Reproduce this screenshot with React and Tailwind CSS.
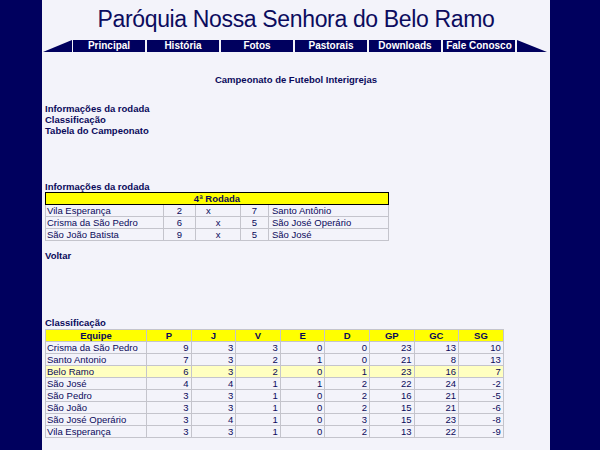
import React from 'react'

const NAV_ITEMS = ['Principal', 'História', 'Fotos', 'Pastorais', 'Downloads', 'Fale Conosco']

const ROUND_GAMES = [
  { home: 'Vila Esperança', hs: 2, as: 7, away: 'Santo Antônio', xLeft: true },
  { home: 'Crisma da São Pedro', hs: 6, as: 5, away: 'São José Operário' },
  { home: 'São João Batista', hs: 9, as: 5, away: 'São José' },
]

const COLUMNS = ['P', 'J', 'V', 'E', 'D', 'GP', 'GC', 'SG']

const STANDINGS = [
  ['Crisma da São Pedro', 9, 3, 3, 0, 0, 23, 13, 10],
  ['Santo Antonio', 7, 3, 2, 1, 0, 21, 8, 13],
  ['Belo Ramo', 6, 3, 2, 0, 1, 23, 16, 7],
  ['São José', 4, 4, 1, 1, 2, 22, 24, -2],
  ['São Pedro', 3, 3, 1, 0, 2, 16, 21, -5],
  ['São João', 3, 3, 1, 0, 2, 15, 21, -6],
  ['São José Operário', 3, 4, 1, 0, 3, 15, 23, -8],
  ['Vila Esperança', 3, 3, 1, 0, 2, 13, 22, -9],
]

const cell = 'border border-[#c4c4cc] h-[12px] p-0 leading-[11px]'

export default function App() {
  return (
    <div
      className="flex w-[600px] h-[450px] overflow-hidden text-[#0a0a5a]"
      style={{ fontFamily: "'Liberation Sans', Arial, sans-serif" }}
    >
      <div className="w-[42px] shrink-0 bg-[#00005e]" />

      <main className="w-[508px] shrink-0 bg-[#f3f3fa] flex flex-col">
        {/* Title */}
        <div className="h-[40px] pt-[6px] text-center">
          <h1 className="text-[23px] leading-[26px] tracking-[-0.35px] text-[#0c0c5e]">
            Paróquia Nossa Senhora do Belo Ramo
          </h1>
        </div>

        {/* Menu */}
        <nav className="flex h-[12px] pl-[1px]">
          <svg width="29" height="12" viewBox="0 0 29 12" className="shrink-0">
            <polygon points="0,12 29,0 29,12" fill="#00005e" />
          </svg>
          <div className="flex gap-[2px] ml-[1px]">
            {NAV_ITEMS.map((item) => (
              <span
                key={item}
                className="w-[72px] h-[12px] bg-[#00005e] text-white text-[10px] font-bold leading-[12px] text-center"
              >
                {item}
              </span>
            ))}
          </div>
          <svg width="30" height="12" viewBox="0 0 30 12" className="shrink-0 ml-[2px]">
            <polygon points="0,0 0,12 30,12" fill="#00005e" />
          </svg>
        </nav>

        <div className="text-[9.5px] px-[3px]">
          <p className="mt-[22px] font-bold text-center leading-[12px]">
            Campeonato de Futebol Interigrejas
          </p>

          {/* Links */}
          <div className="mt-[17px] font-bold leading-[11px] flex flex-col">
            <span>Informações da rodada</span>
            <span>Classificação</span>
            <span>Tabela do Campeonato</span>
          </div>

          {/* Round */}
          <p className="mt-[45px] font-bold leading-[11px]">Informações da rodada</p>
          <table className="w-[343px] border-collapse table-fixed">
            <colgroup>
              <col className="w-[118px]" />
              <col className="w-[32px]" />
              <col className="w-[45px]" />
              <col className="w-[28px]" />
              <col className="w-[120px]" />
            </colgroup>
            <tbody>
              <tr>
                <td colSpan={5} className="border border-black bg-[#ffff00] h-[12px] p-0 leading-[11px] text-center font-bold">
                  4ª Rodada
                </td>
              </tr>
              {ROUND_GAMES.map((g) => (
                <tr key={g.home}>
                  <td className={`${cell} pl-[1px]`}>{g.home}</td>
                  <td className={`${cell} text-center`}>{g.hs}</td>
                  <td className={`${cell} ${g.xLeft ? 'text-left pl-[10px]' : 'text-center'}`}>x</td>
                  <td className={`${cell} text-center`}>{g.as}</td>
                  <td className={`${cell} pl-[3px]`}>{g.away}</td>
                </tr>
              ))}
            </tbody>
          </table>

          <p className="mt-[9px] font-bold leading-[12px]">Voltar</p>

          {/* Standings */}
          <p className="mt-[55px] font-bold leading-[12px]">Classificação</p>
          <table className="w-[458px] border-collapse table-fixed">
            <colgroup>
              <col className="w-[101px]" />
              {COLUMNS.map((c) => (
                <col key={c} className="w-[44.6px]" />
              ))}
            </colgroup>
            <thead>
              <tr className="bg-[#ffff00]">
                <th className={`${cell} font-bold text-center`}>Equipe</th>
                {COLUMNS.map((c) => (
                  <th key={c} className={`${cell} font-bold text-center`}>{c}</th>
                ))}
              </tr>
            </thead>
            <tbody>
              {STANDINGS.map(([team, ...nums]) => (
                <tr key={team} className={team === 'Belo Ramo' ? 'bg-[#ffffc0]' : ''}>
                  <td className={`${cell} pl-[1px]`}>{team}</td>
                  {nums.map((n, i) => (
                    <td key={i} className={`${cell} text-right pr-[2px]`}>{n}</td>
                  ))}
                </tr>
              ))}
            </tbody>
          </table>
        </div>
      </main>

      <div className="flex-1 bg-[#00005e]" />
    </div>
  )
}
